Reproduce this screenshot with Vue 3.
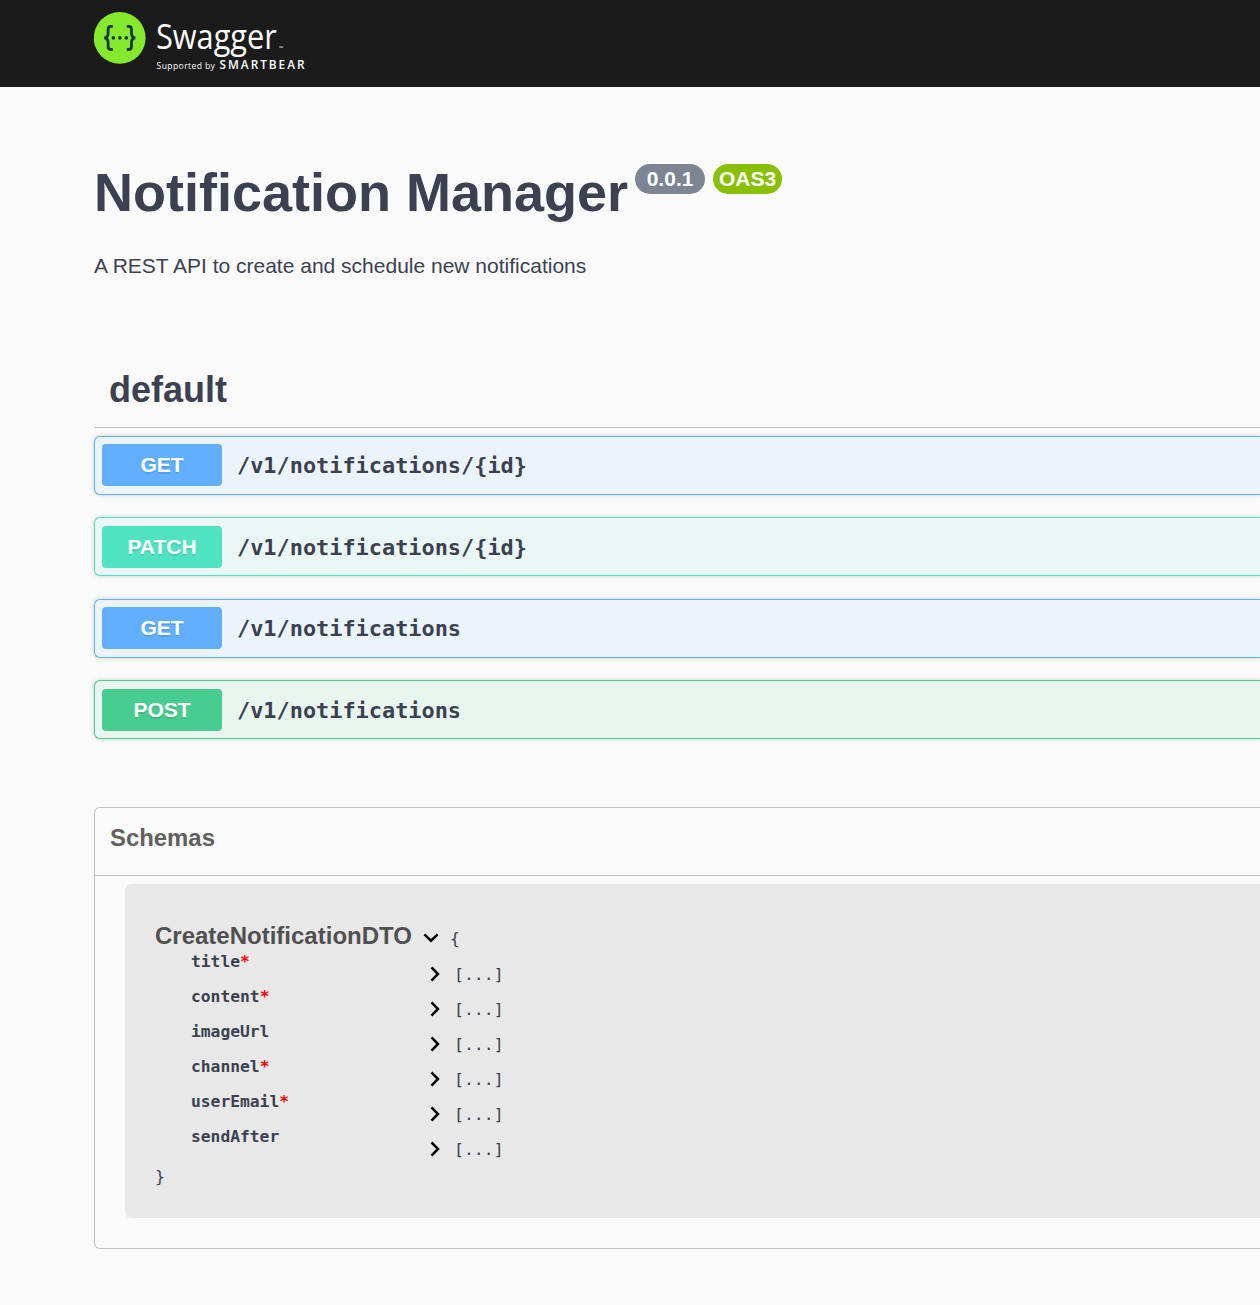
<script setup>
const operations = [
  { method: 'get', path: '/v1/notifications/{id}' },
  { method: 'patch', path: '/v1/notifications/{id}' },
  { method: 'get', path: '/v1/notifications' },
  { method: 'post', path: '/v1/notifications' },
]

const properties = [
  { name: 'title', required: true },
  { name: 'content', required: true },
  { name: 'imageUrl', required: false },
  { name: 'channel', required: true },
  { name: 'userEmail', required: true },
  { name: 'sendAfter', required: false },
]
</script>

<template>
  <div class="page">
    <header class="topbar">
      <svg class="logo" width="220" height="75" viewBox="0 0 220 75">
        <circle cx="25.7" cy="37.9" r="25.9" fill="#85ea2d" />
        <g fill="none" stroke="#173647" stroke-width="2.8">
          <path d="M18.8 26.3h-1.7c-2.1 0-3 1-3 3v4c0 2.8-1 4.3-3.8 4.6 2.8.3 3.8 1.8 3.8 4.6v4c0 2 .9 3 3 3h1.7" />
          <path d="M32.8 26.3h1.7c2.1 0 3 1 3 3v4c0 2.8 1 4.3 3.8 4.6-2.8.3-3.8 1.8-3.8 4.6v4c0 2-.9 3-3 3h-1.7" />
        </g>
        <g fill="#173647">
          <circle cx="19.4" cy="37.9" r="1.8" />
          <circle cx="25.9" cy="37.9" r="1.8" />
          <circle cx="32.3" cy="37.9" r="1.8" />
        </g>
        <g fill="#fff">
          <text class="brand" x="61.9" y="49.2" font-size="34.5" textLength="121" lengthAdjust="spacingAndGlyphs">Swagger</text>
          <text class="brand" x="185" y="49.6" font-size="5" textLength="4" lengthAdjust="spacingAndGlyphs">™</text>
          <text class="brand" x="62.6" y="69" font-size="8.6" textLength="58.3">Supported by</text>
          <text class="bear" x="125.5" y="69" font-size="11.8" textLength="85">SMARTBEAR</text>
        </g>
      </svg>
    </header>

    <main class="content">
      <section class="info">
        <h1 class="title">
          <span>Notification Manager</span>
          <span class="badge version">0.0.1</span>
          <span class="badge oas">OAS3</span>
        </h1>
        <p class="description">A REST API to create and schedule new notifications</p>
      </section>

      <section class="operations">
        <h2 class="tag">default</h2>
        <div v-for="(op, i) in operations" :key="i" class="operation" :class="op.method">
          <span class="method">{{ op.method.toUpperCase() }}</span>
          <span class="path">{{ op.path }}</span>
        </div>
      </section>

      <section class="schemas">
        <h3 class="schemas-title">Schemas</h3>
        <div class="model">
          <div class="model-head">
            <span class="model-name">CreateNotificationDTO</span>
            <svg class="chevron-down" width="16" height="10" viewBox="0 0 16 10">
              <path d="M1.4 1.3 8 7.7l6.6-6.4" />
            </svg>
            <span class="brace">{</span>
          </div>
          <div v-for="p in properties" :key="p.name" class="property">
            <span class="property-name">{{ p.name }}<span v-if="p.required" class="star">*</span></span>
            <svg class="chevron-right" width="10" height="16" viewBox="0 0 10 16">
              <path d="M1.5 1.4 8 8l-6.5 6.6" />
            </svg>
            <span class="collapsed">[...]</span>
          </div>
          <div class="model-end">}</div>
        </div>
      </section>
    </main>
  </div>
</template>

<style>
body {
  background: #fafafa;
}
</style>

<style scoped>
.page {
  height: 1305px;
  overflow: hidden;
  background: #fafafa;
  color: #3b4151;
  font-family: "Liberation Sans", Arial, sans-serif;
}
.topbar {
  height: 87px;
  padding-left: 94px;
  background: #1b1b1b;
}
.logo {
  display: block;
}
.brand {
  font-family: "Open Sans", "Noto Sans", sans-serif;
}
.bear {
  font-family: "Open Sans", "Noto Sans", sans-serif;
  font-weight: 600;
}
.content {
  padding-left: 94px;
}
.info {
  height: 273px;
  box-sizing: border-box;
  padding-top: 75px;
}
.title {
  display: flex;
  align-items: flex-start;
  margin: 0;
  font-size: 54px;
  line-height: 61px;
  white-space: nowrap;
}
.badge {
  box-sizing: border-box;
  height: 30px;
  margin: 2px 0 0 8px;
  border-radius: 15px;
  color: #fff;
  font-size: 21px;
  line-height: 30px;
  text-align: center;
}
.version {
  width: 70px;
  margin-left: 7px;
  background: #7d8492;
}
.oas {
  width: 69px;
  background: #89bf04;
}
.description {
  margin: 31px 0 0;
  font-size: 21px;
  line-height: 24px;
}
.operations {
  height: 447px;
}
.tag {
  box-sizing: border-box;
  height: 68px;
  margin: 0 0 7.8px;
  padding-left: 15px;
  border-bottom: 1px solid rgba(59, 65, 81, 0.3);
  font-size: 36px;
  line-height: 59px;
}
.operation {
  display: flex;
  align-items: flex-start;
  box-sizing: border-box;
  height: 59px;
  margin-bottom: 22.5px;
  padding: 7.5px 7px;
  border: 1px solid;
  border-right: 0;
  border-radius: 6px 0 0 6px;
  box-shadow: 0 0 4px rgba(0, 0, 0, 0.19);
}
.method {
  width: 120px;
  height: 42px;
  border-radius: 4px;
  color: #fff;
  font-size: 21px;
  font-weight: 700;
  line-height: 42px;
  text-align: center;
  text-shadow: 0 1.5px 0 rgba(0, 0, 0, 0.1);
}
.path {
  padding-left: 15px;
  font-family: "DejaVu Sans Mono", monospace;
  font-size: 21.9px;
  font-weight: 700;
  line-height: 44px;
}
.get {
  border-color: #61affe;
  background: #ebf3fb;
}
.get .method {
  background: #61affe;
}
.patch {
  border-color: #50e3c2;
  background: #ebf7f5;
}
.patch .method {
  background: #50e3c2;
}
.post {
  border-color: #49cc90;
  background: #e9f6f0;
}
.post .method {
  background: #49cc90;
}
.schemas {
  box-sizing: border-box;
  height: 442px;
  border: 1px solid rgba(59, 65, 81, 0.3);
  border-right: 0;
  border-radius: 6px 0 0 6px;
}
.schemas-title {
  box-sizing: border-box;
  height: 68px;
  margin: 0;
  padding-left: 15px;
  border-bottom: 1px solid rgba(59, 65, 81, 0.3);
  color: #606060;
  font-size: 23.9px;
  line-height: 60px;
}
.model {
  box-sizing: border-box;
  height: 334px;
  margin: 8px 0 0 30px;
  padding: 38px 0 0 30px;
  border-radius: 6px 0 0 6px;
  background: #e8e8e8;
  font-family: "DejaVu Sans Mono", monospace;
  font-size: 16.5px;
}
.model-head {
  display: flex;
  height: 28px;
  line-height: 28px;
}
.model-name {
  width: 268px;
  color: #505050;
  font-family: "Liberation Sans", Arial, sans-serif;
  font-size: 24px;
  font-weight: 700;
}
.chevron-down {
  margin-top: 11px;
}
.chevron-down path,
.chevron-right path {
  fill: none;
  stroke: #000;
  stroke-width: 2.5;
}
.brace {
  margin-left: 11px;
  line-height: 33px;
}
.property {
  display: flex;
  height: 35px;
  padding-left: 36px;
}
.property-name {
  width: 239px;
  font-size: 16.3px;
  font-weight: 700;
  line-height: 24px;
}
.star {
  color: #f00;
}
.chevron-right {
  margin-top: 16px;
}
.collapsed {
  margin-left: 14px;
  font-size: 16.5px;
  line-height: 50px;
}
.model-end {
  line-height: 34px;
}
</style>
